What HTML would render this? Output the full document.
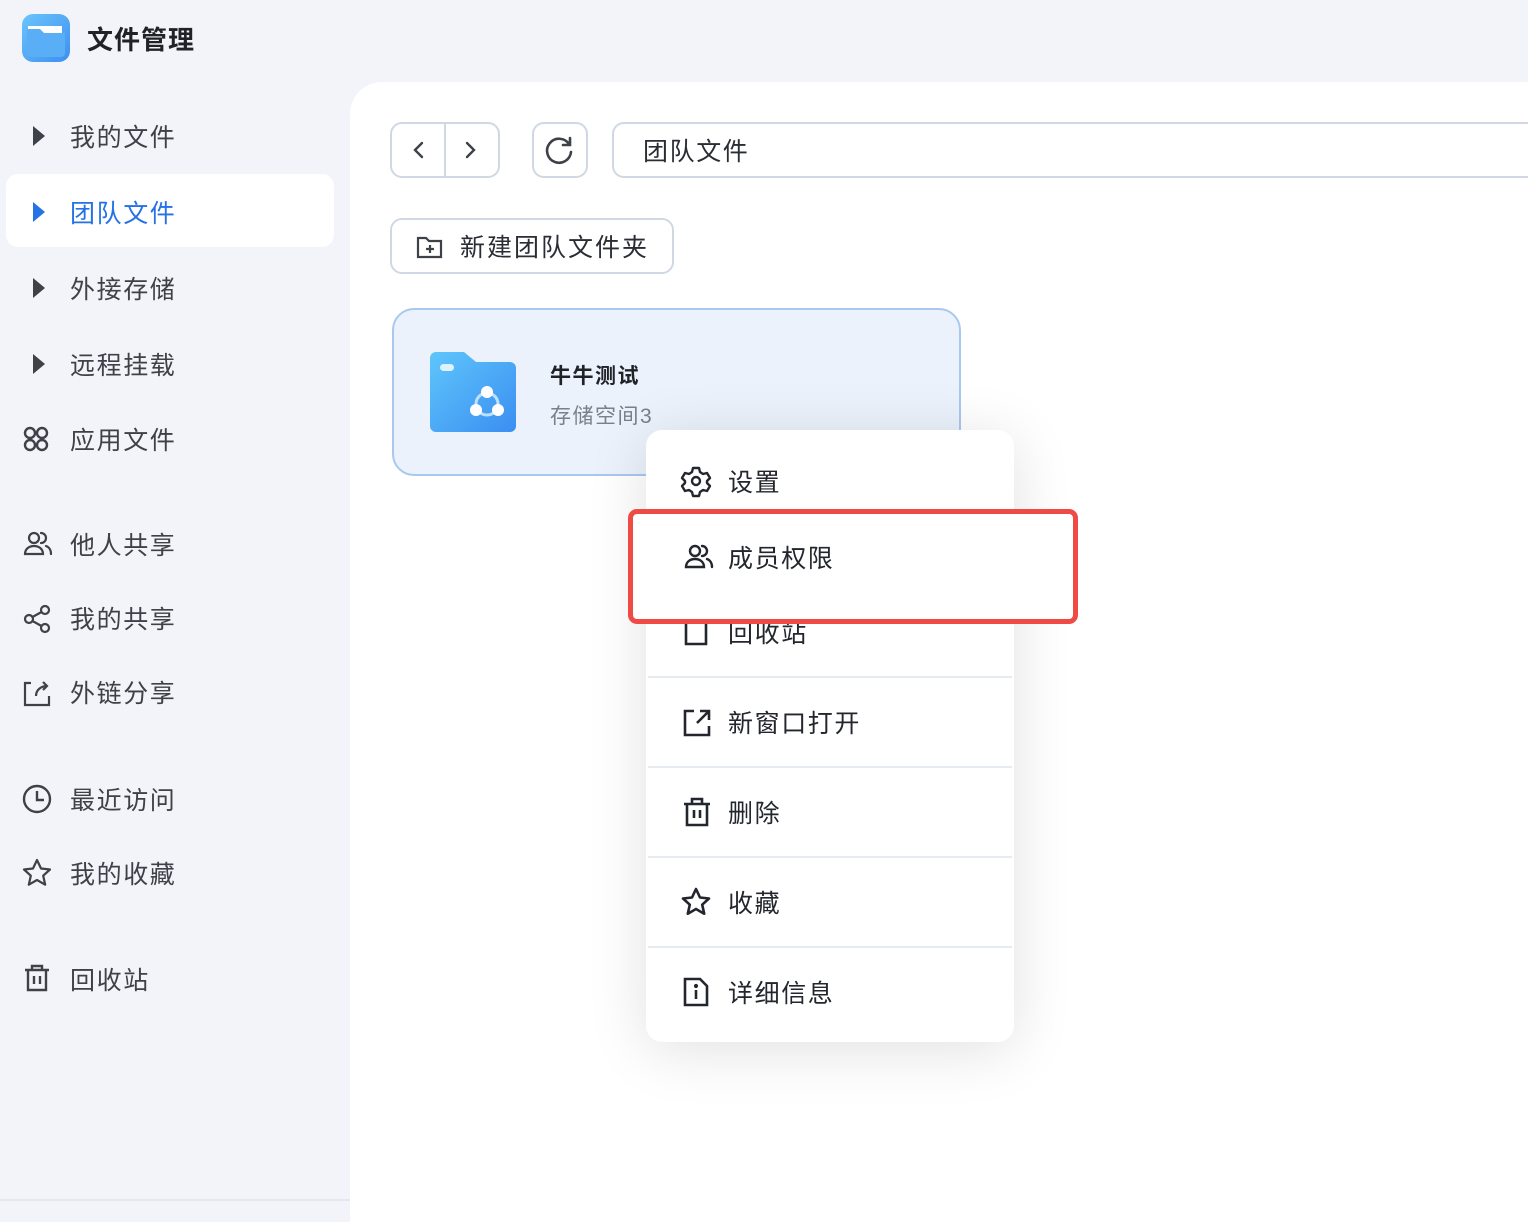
<!DOCTYPE html>
<html><head><meta charset="utf-8"><style>
*{margin:0;padding:0;box-sizing:border-box}
body{width:1528px;height:1212px;background:#f2f4f9;position:relative;overflow:hidden;font-family:"Liberation Sans","Noto Sans CJK SC",sans-serif;color:#3a3d44}
.abs{position:absolute}
.nav{position:absolute;left:70px;font-size:25px;line-height:30px;color:#3e4148;letter-spacing:1.6px;margin-top:2px}
.ic{position:absolute;left:22px}
.main{position:absolute;left:350px;top:82px;width:1200px;height:1140px;background:#fff;border-top-left-radius:32px}
.btn{position:absolute;border:2px solid #cfd8e3;border-radius:12px;background:#fff}
.mi{position:absolute;left:728px;font-size:25px;line-height:30px;color:#23262c;letter-spacing:1.6px;margin-top:2px}
.sep{position:absolute;left:648px;width:364px;height:2px;background:#e6eaf1}
svg{overflow:visible}
</style></head><body>
<svg class="abs" style="left:22px;top:14px" width="48" height="48" viewBox="0 0 48 48">
<defs><linearGradient id="lg" x1="0" y1="0" x2="1" y2="1"><stop offset="0" stop-color="#6cc4fb"/><stop offset="1" stop-color="#3d8ff0"/></linearGradient></defs>
<rect width="48" height="48" rx="11" fill="url(#lg)"/>
<path d="M6 12h34v10H6z" fill="#fff"/>
<path d="M5 17a2 2 0 0 1 2-2h11l4 4h21v20a4 4 0 0 1-4 4H9a4 4 0 0 1-4-4z" fill="#5aaef6"/>
</svg>
<div class="abs" style="left:87px;top:23px;font-size:26px;font-weight:bold;color:#1f2227;line-height:34px;letter-spacing:1px">文件管理</div>

<div class="abs" style="left:6px;top:174px;width:328px;height:73px;background:#fff;border-radius:12px"></div>
<svg class="ic" style="left:33px;top:126px" width="14" height="20"><path d="M0 0L12 10L0 20z" fill="#3e4148"/></svg>
<div class="nav" style="top:121px">我的文件</div>
<svg class="ic" style="left:33px;top:202px" width="14" height="20"><path d="M0 0L12 10L0 20z" fill="#2472e6"/></svg>
<div class="nav" style="top:197px;color:#2472e6">团队文件</div>
<svg class="ic" style="left:33px;top:278px" width="14" height="20"><path d="M0 0L12 10L0 20z" fill="#3e4148"/></svg>
<div class="nav" style="top:273px">外接存储</div>
<svg class="ic" style="left:33px;top:354px" width="14" height="20"><path d="M0 0L12 10L0 20z" fill="#3e4148"/></svg>
<div class="nav" style="top:349px">远程挂载</div>
<svg class="ic" style="top:425px" width="28" height="28" fill="none" stroke="#3e4148" stroke-width="2.4"><circle cx="8" cy="8" r="5"/><circle cx="20" cy="8" r="5"/><circle cx="8" cy="20" r="5"/><circle cx="20" cy="20" r="5"/></svg>
<div class="nav" style="top:424px">应用文件</div>

<svg class="ic" style="top:530px" width="30" height="28" fill="none" stroke="#3e4148" stroke-width="2.2" stroke-linecap="round"><circle cx="12" cy="8" r="5"/><path d="M3 24c0-5 4-8 9-8s9 3 9 8zM19 3a5 5 0 0 1 0 10M24 16c3 1 5 4 5 8"/></svg>
<div class="nav" style="top:529px">他人共享</div>
<svg class="ic" style="top:604px" width="30" height="30" fill="none" stroke="#3e4148" stroke-width="2.2"><circle cx="7" cy="15" r="4"/><circle cx="23" cy="6" r="4"/><circle cx="23" cy="24" r="4"/><path d="M10.5 13l9-5M10.5 17l9 5"/></svg>
<div class="nav" style="top:603px">我的共享</div>
<svg class="ic" style="top:678px" width="30" height="30" fill="none" stroke="#3e4148" stroke-width="2.2"><path d="M9 5H3v22h24v-9M14 18c0-6 5-10 11-10M21 4l4 4-4 4"/></svg>
<div class="nav" style="top:677px">外链分享</div>

<svg class="ic" style="top:784px" width="30" height="30" fill="none" stroke="#3e4148" stroke-width="2.4"><circle cx="15" cy="15" r="13"/><path d="M15 7v9h7"/></svg>
<div class="nav" style="top:784px">最近访问</div>
<svg class="ic" style="top:858px" width="30" height="30" fill="none" stroke="#3e4148" stroke-width="2.2" stroke-linejoin="round"><path d="M15 2l4 8.5 9 1-6.8 6.2 2 9L15 22l-8.2 4.7 2-9L2 11.5l9-1z"/></svg>
<div class="nav" style="top:858px">我的收藏</div>
<svg class="ic" style="top:963px" width="30" height="30" fill="none" stroke="#3e4148" stroke-width="2.4"><path d="M3 7h24M10 7V3h10v4M6 7v20h18V7M12 13v8M18 13v8"/></svg>
<div class="nav" style="top:964px">回收站</div>
<div class="abs" style="left:0;top:1199px;width:350px;height:2px;background:#e4e7ee"></div>

<div class="main"></div>
<div class="btn" style="left:390px;top:122px;width:110px;height:56px"></div>
<div class="abs" style="left:444px;top:124px;width:2px;height:52px;background:#cfd8e3"></div>
<svg class="abs" style="left:410px;top:140px" width="16" height="20" fill="none" stroke="#3e4148" stroke-width="2.4" stroke-linecap="round"><path d="M12 3L5 10l7 7"/></svg>
<svg class="abs" style="left:462px;top:140px" width="16" height="20" fill="none" stroke="#3e4148" stroke-width="2.4" stroke-linecap="round"><path d="M5 3l7 7-7 7"/></svg>
<div class="btn" style="left:532px;top:122px;width:56px;height:56px"></div>
<svg class="abs" style="left:545px;top:135px" width="30" height="30" fill="none" stroke="#3e4148" stroke-width="2.6" stroke-linecap="round"><path d="M24 9A12 12 0 1 0 26 17M25 3v7h-7"/></svg>
<div class="btn" style="left:612px;top:122px;width:940px;height:56px"></div>
<div class="abs" style="left:643px;top:137px;font-size:25px;line-height:30px;color:#2a2d33;letter-spacing:1.6px">团队文件</div>

<div class="btn" style="left:390px;top:218px;width:284px;height:56px"></div>
<svg class="abs" style="left:416px;top:234px" width="28" height="26" fill="none" stroke="#3e4148" stroke-width="2.2"><path d="M2 4h8l3 3h12v16H2zM14 11v8M10 15h8"/></svg>
<div class="abs" style="left:460px;top:233px;font-size:25px;line-height:30px;color:#2a2d33;letter-spacing:2px">新建团队文件夹</div>

<div class="abs" style="left:392px;top:308px;width:569px;height:168px;border:2px solid #a9c8f0;border-radius:22px;background:#ebf2fb"></div>
<svg class="abs" style="left:430px;top:352px" width="86" height="80" viewBox="0 0 86 80">
<defs><linearGradient id="fg" x1="0" y1="0" x2="1" y2="1"><stop offset="0" stop-color="#5ec6fb"/><stop offset="1" stop-color="#3b8ef1"/></linearGradient></defs>
<path d="M0 6a6 6 0 0 1 6-6h28l12 10h34a6 6 0 0 1 6 6v58a6 6 0 0 1-6 6H6a6 6 0 0 1-6-6z" fill="url(#fg)"/>
<rect x="10" y="12" width="14" height="7" rx="3.5" fill="#fff" opacity=".8"/>
<circle cx="57" cy="52" r="11" fill="none" stroke="#bfe0ff" stroke-width="3"/>
<circle cx="57" cy="40" r="6" fill="#fff"/><circle cx="46" cy="58" r="6" fill="#fff"/><circle cx="68" cy="58" r="6" fill="#fff"/>
</svg>
<div class="abs" style="left:550px;top:363px;font-size:21px;font-weight:bold;color:#1f2227;line-height:28px;letter-spacing:1.5px">牛牛测试</div>
<div class="abs" style="left:550px;top:403px;font-size:21px;color:#7a7f88;line-height:28px;letter-spacing:1.5px">存储空间3</div>

<div class="abs" style="left:646px;top:430px;width:368px;height:612px;background:#fff;border-radius:16px;box-shadow:0 8px 60px rgba(0,0,0,.12)"></div>
<svg class="abs" style="left:680px;top:465px" width="32" height="32" fill="none" stroke="#23262c" stroke-width="2.4" stroke-linejoin="round"><path d="M13 3h6l1 4 3 2 4-1 3 5-3 3v2l3 3-3 5-4-1-3 2-1 4h-6l-1-4-3-2-4 1-3-5 3-3v-2l-3-3 3-5 4 1 3-2z"/><circle cx="16" cy="16" r="4"/></svg>
<div class="mi" style="top:466px">设置</div>
<div class="mi" style="top:617px">回收站</div>
<svg class="abs" style="left:683px;top:620px" width="28" height="28" fill="none" stroke="#23262c" stroke-width="2.6"><path d="M3 0v24h20V0"/></svg>
<div class="abs" style="left:628px;top:509px;width:450px;height:115px;border:5px solid #f04a45;border-radius:9px;background:#fff"></div>
<svg class="abs" style="left:683px;top:543px" width="30" height="28" fill="none" stroke="#23262c" stroke-width="2.4" stroke-linecap="round"><circle cx="12" cy="8" r="5"/><path d="M3 24c0-5 4-8 9-8s9 3 9 8zM19 3a5 5 0 0 1 0 10M24 16c3 1 5 4 5 8"/></svg>
<div class="mi" style="top:542px">成员权限</div>
<div class="sep" style="top:676px"></div>
<svg class="abs" style="left:682px;top:708px" width="30" height="30" fill="none" stroke="#23262c" stroke-width="2.6"><path d="M12 3H3v24h24v-9M18 3h9v9M27 3L15 15"/></svg>
<div class="mi" style="top:707px">新窗口打开</div>
<div class="sep" style="top:766px"></div>
<svg class="abs" style="left:682px;top:797px" width="30" height="30" fill="none" stroke="#23262c" stroke-width="2.6"><path d="M2 7h26M10 7V2h10v5M5 7v21h20V7M12 13v8M18 13v8"/></svg>
<div class="mi" style="top:797px">删除</div>
<div class="sep" style="top:856px"></div>
<svg class="abs" style="left:681px;top:887px" width="30" height="30" fill="none" stroke="#23262c" stroke-width="2.6" stroke-linejoin="round"><path d="M15 2l4 8.5 9 1-6.8 6.2 2 9L15 22l-8.2 4.7 2-9L2 11.5l9-1z"/></svg>
<div class="mi" style="top:887px">收藏</div>
<div class="sep" style="top:946px"></div>
<svg class="abs" style="left:683px;top:977px" width="26" height="30" fill="none" stroke="#23262c" stroke-width="2.6"><path d="M2 2h15l7 7v19H2z"/><path d="M13 13v9"/><circle cx="13" cy="9" r="0.8" fill="#23262c"/></svg>
<div class="mi" style="top:977px">详细信息</div>
</body></html>
